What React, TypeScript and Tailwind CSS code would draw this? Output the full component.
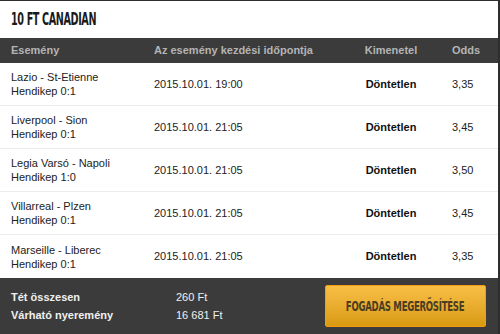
const rows = [
  { match: "Lazio - St-Etienne", hcp: "Hendikep 0:1", date: "2015.10.01. 19:00", odds: "3,35" },
  { match: "Liverpool - Sion", hcp: "Hendikep 0:1", date: "2015.10.01. 21:05", odds: "3,45" },
  { match: "Legia Varsó - Napoli", hcp: "Hendikep 1:0", date: "2015.10.01. 21:05", odds: "3,50" },
  { match: "Villarreal - Plzen", hcp: "Hendikep 0:1", date: "2015.10.01. 21:05", odds: "3,45" },
  { match: "Marseille - Liberec", hcp: "Hendikep 0:1", date: "2015.10.01. 21:05", odds: "3,35" },
];

const condensed = { fontFamily: '"DejaVu Sans Condensed", "Liberation Sans", Arial, sans-serif' };

export default function App() {
  return (
    <div className="w-[500px] h-[334px] overflow-hidden bg-white border-t border-r-2 border-[#2e2e2e] flex flex-col font-['Liberation_Sans',Arial,sans-serif] text-[11px]">
      <div className="h-[37px] flex items-center px-[11px]">
        <h1
          style={condensed}
          className="inline-block text-[17px] font-bold text-[#1a1a1a] leading-none tracking-[-0.6px] origin-left scale-x-[0.63] whitespace-nowrap"
        >
          10 FT CANADIAN
        </h1>
      </div>

      <div className="h-[25px] bg-[#3b3b3b] grid grid-cols-[143px_185px_104px_1fr] items-center px-[11px] text-[#b4b4b4] font-bold">
        <span>Esemény</span>
        <span>Az esemény kezdési időpontja</span>
        <span className="text-center">Kimenetel</span>
        <span className="pl-[9px]">Odds</span>
      </div>

      <div className="flex flex-col">
        {rows.map((r, i) => (
          <div
            key={i}
            className={
              "h-[43px] grid grid-cols-[143px_185px_104px_1fr] items-center px-[11px] text-[#222] " +
              (i < rows.length - 1 ? "border-b border-[#ececec]" : "")
            }
          >
            <div className="leading-[14px]">
              <div>{r.match}</div>
              <div>{r.hcp}</div>
            </div>
            <span>{r.date}</span>
            <span className="text-center font-bold text-[#111]">Döntetlen</span>
            <span className="pl-[9px]">{r.odds}</span>
          </div>
        ))}
      </div>

      <div className="flex-1 bg-[#3b3b3b] flex items-center justify-between pl-[11px] pr-[12px]">
        <div className="grid grid-cols-[165px_auto] gap-y-[4px] text-[#f0f0f0] leading-[14px]">
          <span className="font-bold">Tét összesen</span>
          <span>260 Ft</span>
          <span className="font-bold">Várható nyeremény</span>
          <span>16 681 Ft</span>
        </div>
        <button className="w-[161px] h-[42px] rounded-[2px] border border-[#f39b12] bg-gradient-to-b from-[#f8bf45] to-[#d99a0e] flex items-center justify-center">
          <span
            style={condensed}
            className="inline-block text-[14px] font-bold text-[#4b3d22] tracking-[-0.4px] scale-x-[0.68] whitespace-nowrap"
          >
            FOGADÁS MEGERŐSÍTÉSE
          </span>
        </button>
      </div>
    </div>
  );
}
